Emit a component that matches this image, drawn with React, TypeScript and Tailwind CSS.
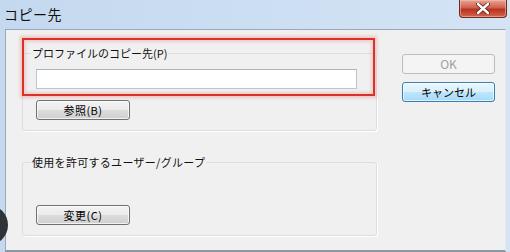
import React from "react";

const btn =
  "h-[20px] w-[94px] rounded-[3px] border border-[#707070] bg-[linear-gradient(to_bottom,#f2f2f2_0%,#ebebeb_50%,#dddddd_51%,#cfcfcf_100%)] text-[11px] leading-[18px] tracking-[0.5px] text-black shadow-[inset_0_0_0_1px_rgba(255,255,255,0.7)] flex items-center justify-center";

export default function App() {
  return (
    <div className="relative w-[510px] h-[252px] overflow-hidden bg-[linear-gradient(to_right,#c4d8ef,#d4e4f5)] font-['Noto_Sans_CJK_JP',sans-serif] flex flex-col">
      {/* title bar */}
      <div className="h-[29px] flex items-start justify-between shrink-0">
        <span className="pl-[4px] pt-[6px] text-[14px] leading-[17px] tracking-[0.5px] text-[#111]">コピー先</span>
        <div className="mr-[3px] w-[48px] h-[18px] rounded-b-[4px] border border-t-0 border-[#6b2a22] bg-[linear-gradient(to_bottom,#e8a595_0%,#d0604c_45%,#b8321f_55%,#d2664e_100%)] shadow-[inset_0_0_0_1px_rgba(255,200,190,0.5)] flex items-center justify-center">
          <svg width="14" height="11" viewBox="0 0 14 11">
            <path d="M2 1 L12 10 M12 1 L2 10" stroke="#5a1a12" strokeWidth="4" strokeLinecap="round" />
            <path d="M2 1 L12 10 M12 1 L2 10" stroke="#ffffff" strokeWidth="2.4" strokeLinecap="round" />
          </svg>
        </div>
      </div>

      {/* content */}
      <div className="flex-1 ml-[5px] mr-[4px] bg-[#f0f0f0] border-t border-l border-[#97a8ba] border-r border-r-[#e4eaf1] border-b-2 border-b-[#8c98a5] flex pl-[16px] pt-[16px]">
        <div className="w-[355px] flex flex-col gap-[24px]">
          <fieldset className="border border-[#d5dfe5] rounded-[3px] shadow-[1px_1px_0_#fff] pl-[13px] pr-[19px] pt-[9px] pb-[10px]">
            <legend className="-ml-[5px] px-[1px] text-[11px] leading-[14px] text-[#111]">プロファイルのコピー先(P)</legend>
            <div className="h-[20px] w-[321px] bg-white border border-[#b9c6d3] border-t-[#a9b4c0]"></div>
            <div className="mt-[11px]">
              <button className={btn}>参照(B)</button>
            </div>
          </fieldset>
          <fieldset className="border border-[#d5dfe5] rounded-[3px] shadow-[1px_1px_0_#fff] pl-[13px] pt-[36px] pb-[10px]">
            <legend className="-ml-[5px] px-[1px] text-[11px] leading-[14px] tracking-[0.3px] text-[#111]">使用を許可するユーザー/グループ</legend>
            <button className={btn}>変更(C)</button>
          </fieldset>
        </div>
        <div className="ml-[25px] pt-[8px] flex flex-col gap-[8px]">
          <button className="h-[20px] w-[93px] rounded-[3px] border border-[#b8bdc1] bg-[#f4f4f4] text-[12px] leading-[18px] text-[#a0a0a0] flex items-center justify-center">
            OK
          </button>
          <button className="h-[20px] w-[93px] rounded-[3px] border border-[#3c7fb1] bg-[linear-gradient(to_bottom,#eaf6fd_0%,#d9f0fc_50%,#bee6fd_51%,#a7d9f5_100%)] shadow-[inset_0_0_0_1px_rgba(255,255,255,0.6)] text-[11px] leading-[18px] text-black flex items-center justify-center">
            キャンセル
          </button>
        </div>
      </div>

      {/* red highlight annotation */}
      <div className="absolute left-[22px] top-[38px] w-[353px] h-[58px] border-2 border-[#d8332a] shadow-[0_0_3px_2px_rgba(240,160,160,0.55),inset_0_0_3px_2px_rgba(240,160,160,0.45)]"></div>

      {/* dark circle overlay at left edge */}
      <div className="absolute left-[-32px] top-[205px] w-[40px] h-[40px] rounded-full bg-[#2e3337]"></div>
    </div>
  );
}
